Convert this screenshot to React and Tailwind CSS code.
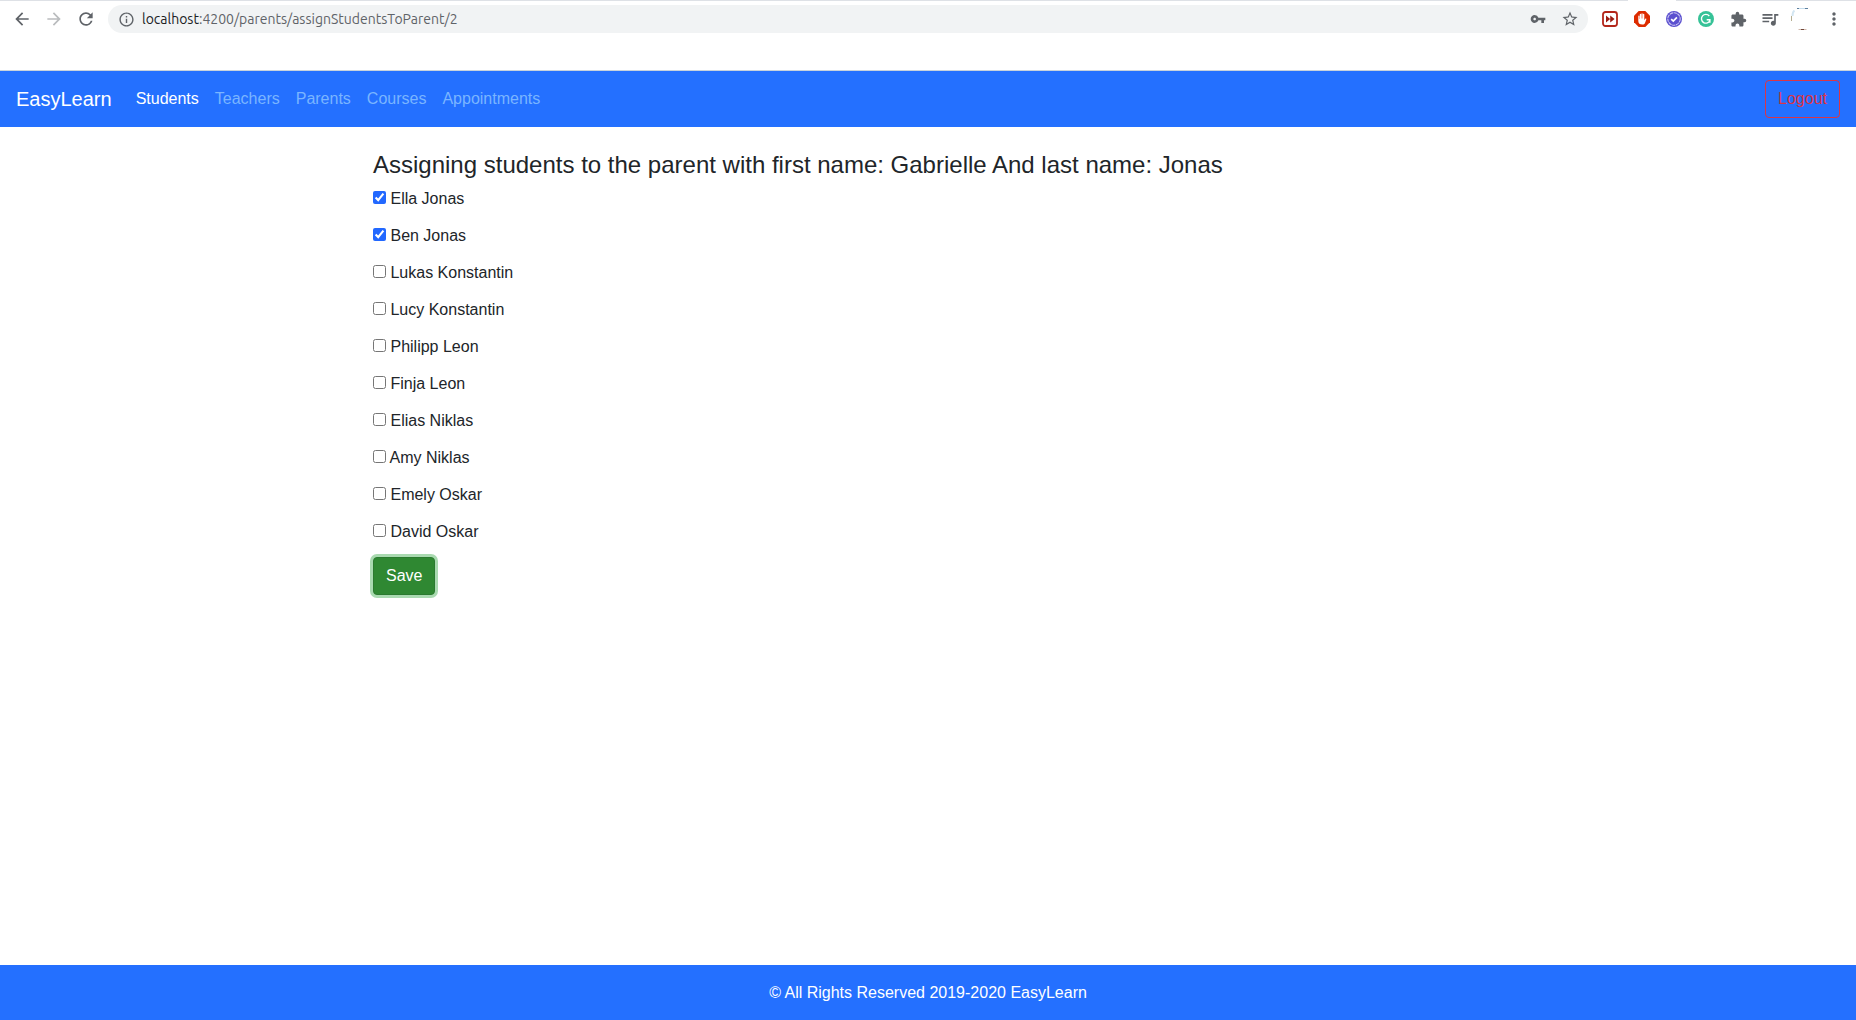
import React from "react";
import {
  MdArrowBack,
  MdArrowForward,
  MdRefresh,
  MdInfoOutline,
  MdVpnKey,
  MdStarBorder,
  MdExtension,
  MdQueueMusic,
  MdMoreVert,
} from "react-icons/md";

const students = [
  { name: "Ella Jonas", assigned: true },
  { name: "Ben Jonas", assigned: true },
  { name: "Lukas Konstantin", assigned: false },
  { name: "Lucy Konstantin", assigned: false },
  { name: "Philipp Leon", assigned: false },
  { name: "Finja Leon", assigned: false },
  { name: "Elias Niklas", assigned: false },
  { name: "Amy Niklas", assigned: false },
  { name: "Emely Oskar", assigned: false },
  { name: "David Oskar", assigned: false },
];

const links = ["Students", "Teachers", "Parents", "Courses", "Appointments"];

function IconButton({ label, children }) {
  return (
    <button type="button" aria-label={label} className="flex size-8 shrink-0 items-center justify-center text-[#5f6368]">
      {children}
    </button>
  );
}

function SkipIcon() {
  return (
    <svg viewBox="0 0 16 16" className="size-4">
      <rect x="1" y="1" width="14" height="14" rx="2.5" fill="#fff" stroke="#b3261a" strokeWidth="1.800" />
      <path d="M4 4.400L8.200 8 4 11.600zM8.200 4.400L12.600 8 8.200 11.600z" fill="#9c1c12" />
    </svg>
  );
}

function HandIcon() {
  return (
    <svg viewBox="0 0 16 16" className="size-4">
      <path d="M4.700 0h6.600L16 4.700v6.600L11.300 16H4.700L0 11.300V4.700z" fill="#dd2c00" />
      <path
        d="M4.300 5.200c0-.9 1.200-.9 1.200 0V8h.3V3.500c0-1 1.300-1 1.300 0v4h.3V2.900c0-1 1.300-1 1.300 0v4.600H9V3.600c0-1 1.300-1 1.300 0v5.600l.8-1.300c.5-.8 1.500-.4 1.200.5l-1.300 3.500c-.5 1.100-1.200 1.700-2.700 1.700-2.600 0-4-1.300-4-3.600z"
        fill="#fff"
      />
    </svg>
  );
}

function BadgeIcon() {
  return (
    <svg viewBox="0 0 16 16" className="size-4">
      <circle cx="8" cy="8" r="8" fill="#5b50cf" />
      <circle cx="8" cy="8" r="6.200" fill="none" stroke="#c9c4f2" strokeWidth="1.100" strokeDasharray="3.400 0.600" />
      <path d="M5.200 8.100l2.100 2 3.600-3.800" fill="none" stroke="#fff" strokeWidth="1.700" />
    </svg>
  );
}

function GreenCircleIcon() {
  return (
    <svg viewBox="0 0 16 16" className="size-4">
      <circle cx="8" cy="8" r="8" fill="#36c297" />
      <path d="M11.300 5A4.400 4.400 0 1 0 12 9.200M8.700 8.800h3.200v3" fill="none" stroke="#fff" strokeWidth="1.400" />
    </svg>
  );
}

function AvatarIcon() {
  return (
    <svg viewBox="0 0 24 24" className="size-6">
      <path d="M7 1.500h3M14 1.500h4" stroke="#5c7f9e" strokeWidth="1" />
      <path d="M9 1.500h6" stroke="#c5dcec" strokeWidth="1" />
      <path d="M4.500 3.500Q2.500 5 2.500 9" fill="none" stroke="#d3e6f2" strokeWidth="2" />
      <path d="M1.500 9v5" stroke="#b5ae91" strokeWidth="1" />
      <path d="M8.500 22.500h8" stroke="#d2b8ac" strokeWidth="1" />
      <path d="M11 22.500h3" stroke="#70483a" strokeWidth="1" />
    </svg>
  );
}

function BrowserBar() {
  return (
    <div className="h-[70px] bg-white">
      <div className="flex h-px">
        <div className="grow bg-[#dee1e6]" />
        <div className="w-12" />
        <div className="w-[180px] bg-[#dee1e6]" />
      </div>
      <div className="flex items-center px-1.5 pt-0.5">
        <IconButton label="Back">
          <MdArrowBack size={20} />
        </IconButton>
        <button type="button" aria-label="Forward" className="flex size-8 shrink-0 items-center justify-center text-[#babcbe]">
          <MdArrowForward size={20} />
        </button>
        <IconButton label="Reload">
          <MdRefresh size={20} />
        </IconButton>
        <div className="ml-1.5 mr-1.5 flex h-7 grow items-center rounded-full bg-[#f1f3f4]">
          <div className="flex w-[34px] shrink-0 items-center justify-center pl-0.5 text-[#5f6368]">
            <MdInfoOutline size={17} />
          </div>
          <a
            href="#"
            className="grow whitespace-nowrap font-['Ubuntu','Noto_Sans',sans-serif] text-sm leading-5 text-[#5f6368]"
          >
            <span className="text-[#202124]">localhost</span>:4200/parents/assignStudentsToParent/2
          </a>
          <IconButton label="Passwords">
            <MdVpnKey size={16} />
          </IconButton>
          <IconButton label="Bookmark">
            <MdStarBorder size={18} />
          </IconButton>
          <div className="w-0.5" />
        </div>
        <IconButton label="Video skipper"><SkipIcon /></IconButton>
        <IconButton label="Ad blocker"><HandIcon /></IconButton>
        <IconButton label="Verified badge"><BadgeIcon /></IconButton>
        <IconButton label="Writing assistant"><GreenCircleIcon /></IconButton>
        <IconButton label="Extensions"><MdExtension size={17} /></IconButton>
        <IconButton label="Media"><MdQueueMusic size={20} /></IconButton>
        <IconButton label="Profile"><AvatarIcon /></IconButton>
        <IconButton label="Menu"><MdMoreVert size={20} /></IconButton>
      </div>
    </div>
  );
}

export default function App() {
  return (
    <div className="flex min-h-screen flex-col bg-white font-['Liberation_Sans',Arial,sans-serif] text-base text-[#212529]">
      <BrowserBar />
      <header className="flex items-center border-t border-[#c9d3dc] bg-[#2470ff] px-4 py-2">
        <a href="#" className="mr-4 py-1 text-xl leading-[30px] text-white">EasyLearn</a>
        <nav className="flex grow">
          {links.map((link, i) => (
            <a key={link} href="#" className={i === 0 ? "p-2 text-white" : "p-2 text-[#7ab5ff]"}>
              {link}
            </a>
          ))}
        </nav>
        <button type="button" className="rounded border border-[#dc3545] px-3 py-1.5 leading-6 text-[#dc3545]">
          Logout
        </button>
      </header>
      <main className="mx-auto w-full max-w-[1140px] grow px-[15px] pt-6">
        <h4 className="mb-2 text-2xl leading-7 font-normal">
          Assigning students to the parent with first name: Gabrielle And last name: Jonas
        </h4>
        <form onSubmit={(e) => e.preventDefault()}>
          {students.map((s) => (
            <div key={s.name} className="h-[37px] leading-6">
              <label>
                <input
                  type="checkbox"
                  defaultChecked={s.assigned}
                  className="size-[13px] align-baseline accent-[#2268ff]"
                />{" "}
                {s.name}
              </label>
            </div>
          ))}
          <button
            type="submit"
            className="rounded border border-[#2b7a2f] bg-[#2f8832] px-3 py-1.5 leading-6 text-white ring-3 ring-[#a9dab0]"
          >
            Save
          </button>
        </form>
      </main>
      <footer className="flex h-[55px] items-center justify-center bg-[#2470ff] text-white">
        © All Rights Reserved 2019-2020 EasyLearn
      </footer>
    </div>
  );
}
